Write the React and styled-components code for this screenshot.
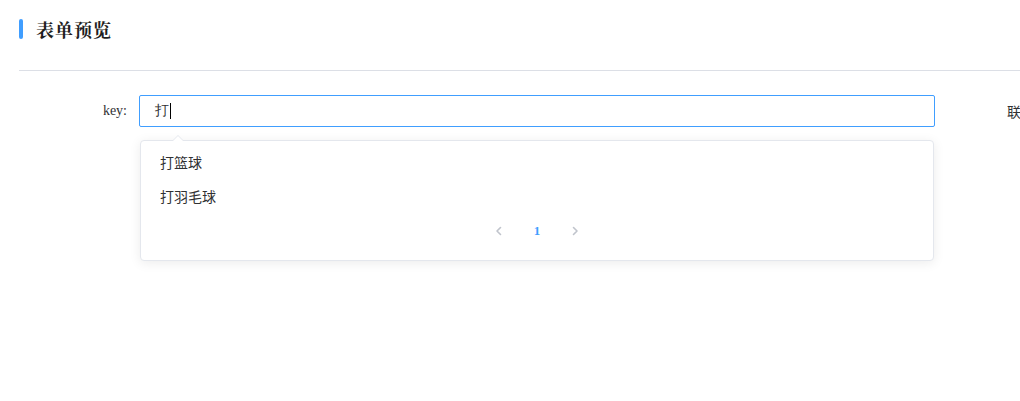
import React from "react";
import styled, { createGlobalStyle } from "styled-components";

const Global = createGlobalStyle`
  html, body { margin: 0; padding: 0; background: #fff; overflow: hidden; }
  body { font-family: serif; color: #303133; }
`;

const Page = styled.div`
  width: 1020px;
  height: 401px;
  overflow: hidden;
  padding-left: 19px;
  box-sizing: border-box;
`;

const Header = styled.div`
  display: flex;
  align-items: center;
  box-sizing: border-box;
  height: 71px;
  padding-bottom: 13px;
  border-bottom: 1px solid #dcdfe6;
`;

const Bar = styled.span`
  width: 4px;
  height: 20px;
  border-radius: 2px;
  background: #409eff;
  margin-right: 13px;
`;

const Title = styled.h2`
  margin: 0;
  font-family: "Noto Serif CJK SC", serif;
  font-size: 18px;
  font-weight: bold;
  color: #1f1f1f;
  letter-spacing: 1px;
`;

const FormRow = styled.div`
  display: flex;
  align-items: flex-start;
  margin-top: 24px;
  white-space: nowrap;
`;

const Label = styled.label`
  width: 120px;
  flex-shrink: 0;
  padding-right: 12px;
  box-sizing: border-box;
  text-align: right;
  font-family: "Liberation Serif", serif;
  font-size: 14px;
  line-height: 32px;
  color: #303133;
`;

const Field = styled.div`
  position: relative;
  width: 796px;
  flex-shrink: 0;
`;

const Input = styled.div`
  height: 32px;
  box-sizing: border-box;
  border: 1px solid #409eff;
  border-radius: 2px;
  padding-left: 15px;
  display: flex;
  align-items: center;
  font-family: serif;
  font-size: 14px;
  color: #303133;
`;

const Caret = styled.span`
  display: inline-block;
  width: 1px;
  height: 16px;
  background: #000;
  margin-left: 1px;
`;

const Dropdown = styled.div`
  position: absolute;
  left: 1px;
  top: 45px;
  width: 794px;
  box-sizing: border-box;
  background: #fff;
  border: 1px solid #e4e7ed;
  border-radius: 4px;
  box-shadow: 0 2px 12px rgba(0, 0, 0, 0.08);
  padding: 4px 0 13px;
`;

const Arrow = styled.span`
  position: absolute;
  top: -6px;
  left: 31px;
  width: 0;
  height: 0;
  border-left: 6px solid transparent;
  border-right: 6px solid transparent;
  border-bottom: 6px solid #e4e7ed;
  &::after {
    content: "";
    position: absolute;
    left: -5px;
    top: 1px;
    border-left: 5px solid transparent;
    border-right: 5px solid transparent;
    border-bottom: 5px solid #fff;
  }
`;

const Item = styled.div`
  height: 34px;
  line-height: 34px;
  padding-left: 19px;
  font-family: "Noto Sans CJK SC", sans-serif;
  font-size: 14px;
  color: #303133;
`;

const Pager = styled.div`
  display: flex;
  justify-content: center;
  align-items: center;
  gap: 16px;
  height: 32px;
  margin-top: 2px;
`;

const PageBtn = styled.span`
  width: 22px;
  display: flex;
  justify-content: center;
  align-items: center;
  color: ${(p) => (p.$active ? "#409eff" : "#c0c4cc")};
  font-family: "Liberation Serif", serif;
  font-weight: bold;
  font-size: 13px;
`;

const Other = styled.div`
  margin-left: 72px;
  font-family: "Noto Sans CJK SC", sans-serif;
  font-size: 14px;
  line-height: 32px;
  color: #303133;
`;

const Chevron = ({ dir }) => (
  <svg width="12" height="12" viewBox="0 0 12 12" fill="none">
    <path
      d={dir === "left" ? "M7.5 2.5 L4 6 L7.5 9.5" : "M4.5 2.5 L8 6 L4.5 9.5"}
      stroke="currentColor"
      strokeWidth="1.6"
      strokeLinecap="round"
      strokeLinejoin="round"
    />
  </svg>
);

export default function App() {
  return (
    <>
      <Global />
      <Page>
        <Header>
          <Bar />
          <Title>表单预览</Title>
        </Header>
        <FormRow>
          <Label>key:</Label>
          <Field>
            <Input>
              打<Caret />
            </Input>
            <Dropdown>
              <Arrow />
              <Item>打篮球</Item>
              <Item>打羽毛球</Item>
              <Pager>
                <PageBtn><Chevron dir="left" /></PageBtn>
                <PageBtn $active>1</PageBtn>
                <PageBtn><Chevron dir="right" /></PageBtn>
              </Pager>
            </Dropdown>
          </Field>
          <Other>联</Other>
        </FormRow>
      </Page>
    </>
  );
}
